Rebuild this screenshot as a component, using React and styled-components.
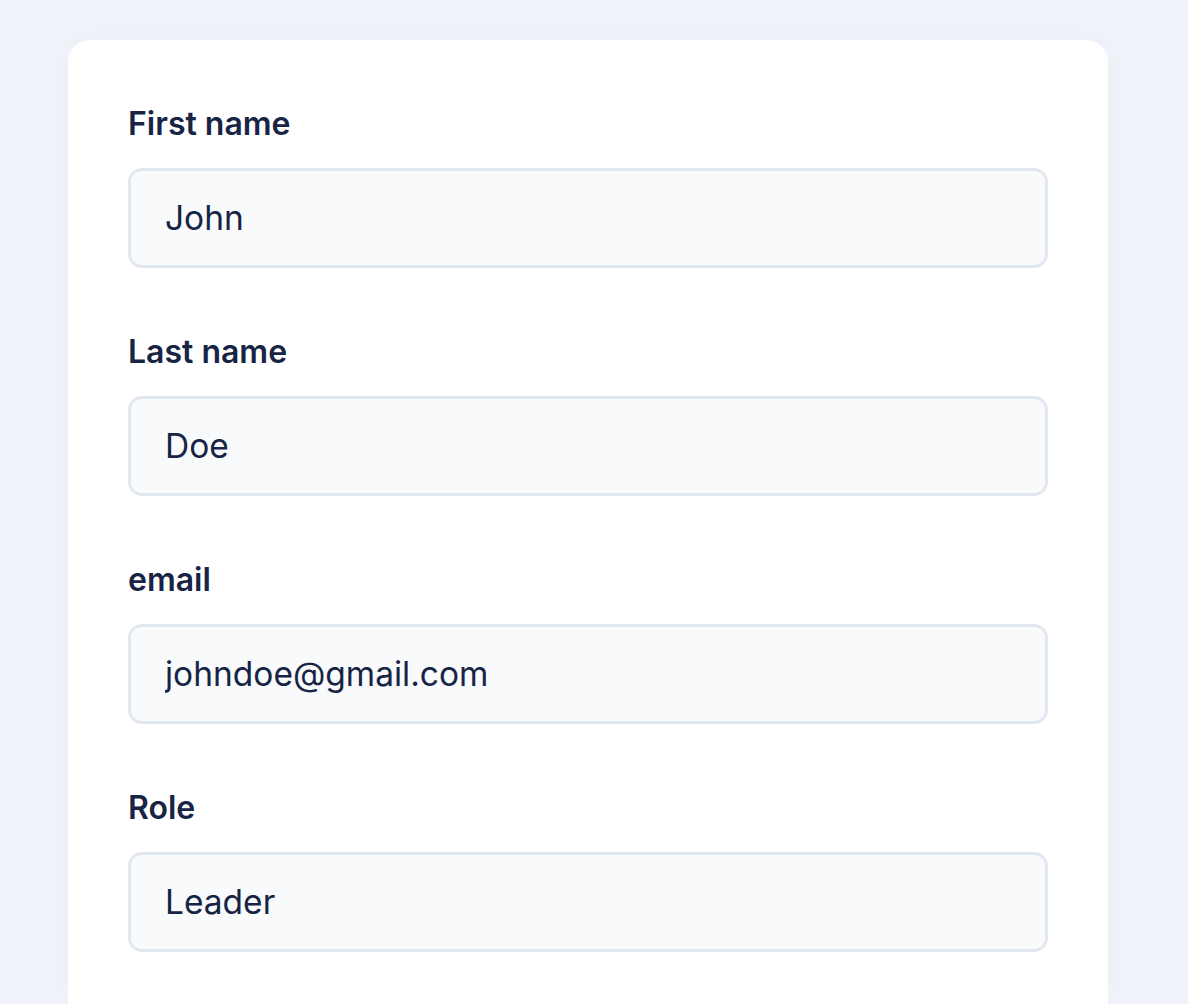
import React from "react";
import styled, { createGlobalStyle } from "styled-components";

const GlobalStyle = createGlobalStyle`
  html, body {
    margin: 0;
    padding: 0;
    background: #f0f4fa;
    font-family: Inter, "Noto Sans", sans-serif;
    color: #172444;
    overflow: hidden;
  }
  * { box-sizing: border-box; }
`;

const Page = styled.div`
  height: 1004px;
  padding: 40px 0 0 68px;
`;

const Card = styled.form`
  width: 1040px;
  height: 964px;
  background: #ffffff;
  border-radius: 22px 22px 0 0;
  padding: 60px;
  display: flex;
  flex-direction: column;
  gap: 60px;
  box-shadow: 0 0 40px rgba(30, 50, 90, 0.03);
`;

const Field = styled.div`
  display: flex;
  flex-direction: column;
  gap: 20px;
`;

const Label = styled.label`
  font-size: 32px;
  line-height: 48px;
  font-weight: 600;
  color: #172444;
`;

const Input = styled.input`
  width: 100%;
  height: 100px;
  padding: 0 34px;
  border: 3px solid #e2e8f0;
  border-radius: 14px;
  background: #f8fafc;
  font-family: Inter, "Noto Sans", sans-serif;
  font-size: 33.5px;
  color: #172444;
  outline: none;
`;

const fields = [
  { id: "first", label: "First name", value: "John" },
  { id: "last", label: "Last name", value: "Doe" },
  { id: "email", label: "email", value: "johndoe@gmail.com" },
  { id: "role", label: "Role", value: "Leader" },
];

export default function App() {
  return (
    <>
      <GlobalStyle />
      <Page>
        <Card>
          {fields.map((f) => (
            <Field key={f.id}>
              <Label htmlFor={f.id}>{f.label}</Label>
              <Input id={f.id} defaultValue={f.value} />
            </Field>
          ))}
        </Card>
      </Page>
    </>
  );
}
